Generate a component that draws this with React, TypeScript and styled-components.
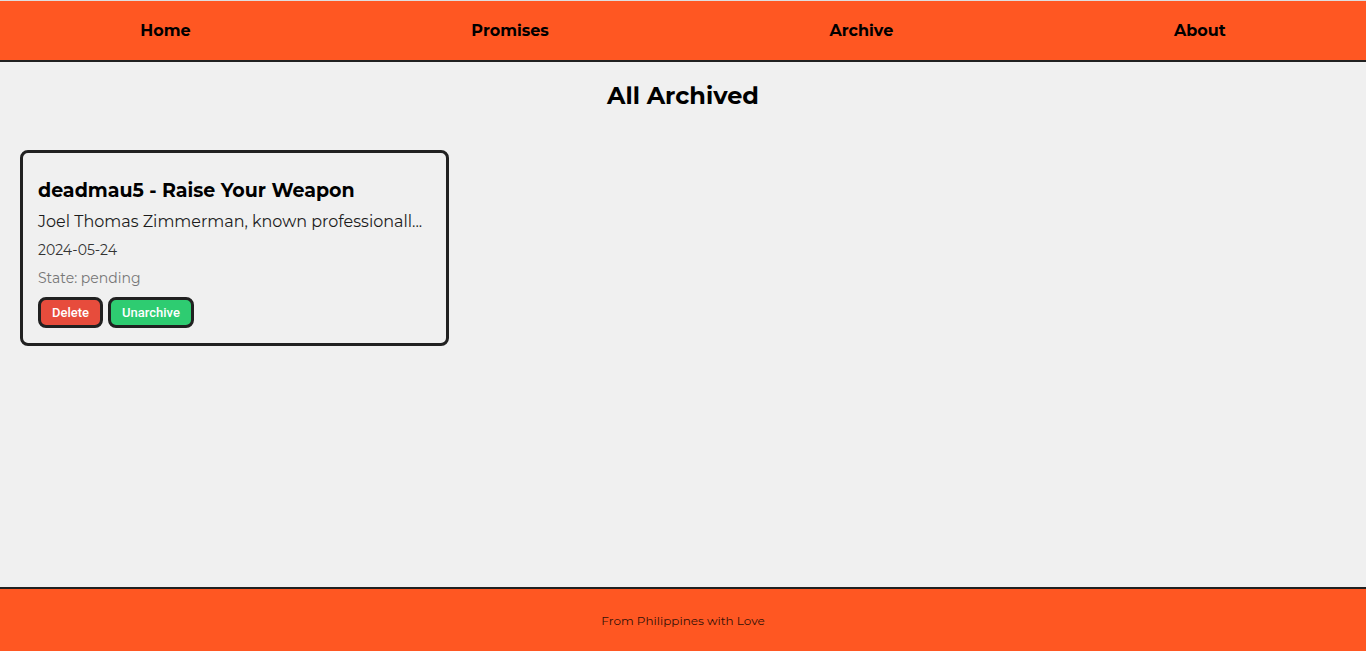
import React from 'react';
import styled, { createGlobalStyle } from 'styled-components';

const INK = '#212121';
const ORANGE = '#ff5722';

const GlobalStyle = createGlobalStyle`
  *, *::before, *::after {
    box-sizing: border-box;
  }

  body {
    margin: 0;
    background: #f0f0f0;
    color: #000;
    font-family: Montserrat, Inter, sans-serif;
    font-size: 16px;
  }
`;

const Page = styled.div`
  display: flex;
  flex-direction: column;
  min-height: 100vh;
  border-top: 1px solid #dedede;
`;

const NavBar = styled.nav`
  background: ${ORANGE};
  border-bottom: 2px solid ${INK};
`;

const NavList = styled.ul`
  display: flex;
  justify-content: space-around;
  margin: 0;
  padding: 20px 0;
  list-style: none;
`;

const NavLink = styled.a`
  display: block;
  color: #000;
  font-size: 16px;
  font-weight: 700;
  line-height: 19px;
  text-decoration: none;
`;

const Main = styled.main`
  flex: 1;
`;

const PageTitle = styled.h1`
  margin: 20px 0;
  font-size: 24px;
  font-weight: 700;
  line-height: 28px;
  text-align: center;
`;

const CardGrid = styled.section`
  display: grid;
  grid-template-columns: repeat(3, minmax(0, 1fr));
  gap: 20px;
  padding: 20px;
`;

const Card = styled.article`
  padding: 25px 15px 15px;
  border: 3px solid ${INK};
  border-radius: 8px;
`;

const CardTitle = styled.h2`
  margin: 0 0 8px;
  font-size: 19px;
  font-weight: 700;
  line-height: 26px;
`;

const Description = styled.p`
  margin: 0 0 9px;
  color: #1c1c1c;
  font-size: 16px;
  font-weight: 400;
  line-height: 20px;
`;

const Meta = styled.p<{ $color: string }>`
  margin: 0 0 10px;
  color: ${({ $color }) => $color};
  font-size: 14px;
  font-weight: 400;
  line-height: 18px;
`;

const Actions = styled.div`
  display: flex;
  gap: 5px;
`;

const ActionButton = styled.button<{ $color: string }>`
  padding: 5px 11px;
  border: 3px solid ${INK};
  border-radius: 8px;
  background: ${({ $color }) => $color};
  color: #fff;
  font-family: Roboto, Arial, sans-serif;
  font-size: 13px;
  font-weight: 500;
  line-height: 15px;
  cursor: pointer;
`;

const Footer = styled.footer`
  padding: 24px 20px 23px;
  border-top: 2px solid ${INK};
  background: ${ORANGE};
  color: #331107;
  font-size: 12px;
  font-weight: 400;
  line-height: 15px;
  text-align: center;
`;

const links = ['Home', 'Promises', 'Archive', 'About'];

const promises = [
  {
    title: 'deadmau5 - Raise Your Weapon',
    description: 'Joel Thomas Zimmerman, known professionall...',
    date: '2024-05-24',
    state: 'pending',
  },
];

export default function App() {
  return (
    <>
      <GlobalStyle />
      <Page>
        <NavBar>
          <NavList>
            {links.map((label) => (
              <li key={label}>
                <NavLink href={`#${label.toLowerCase()}`}>{label}</NavLink>
              </li>
            ))}
          </NavList>
        </NavBar>
        <Main>
          <PageTitle>All Archived</PageTitle>
          <CardGrid>
            {promises.map((item) => (
              <Card key={item.title}>
                <CardTitle>{item.title}</CardTitle>
                <Description>{item.description}</Description>
                <Meta $color="#333">{item.date}</Meta>
                <Meta $color="#777">State: {item.state}</Meta>
                <Actions>
                  <ActionButton type="button" $color="#e74c3c">Delete</ActionButton>
                  <ActionButton type="button" $color="#2ecc71">Unarchive</ActionButton>
                </Actions>
              </Card>
            ))}
          </CardGrid>
        </Main>
        <Footer>From Philippines with Love</Footer>
      </Page>
    </>
  );
}
